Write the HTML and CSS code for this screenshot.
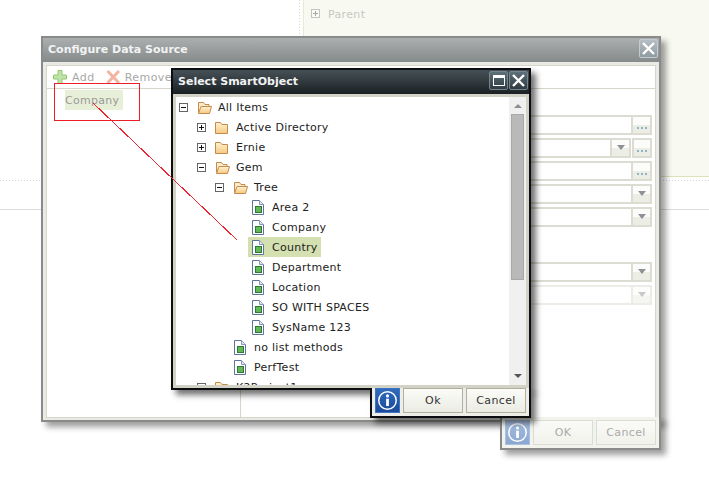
FILE: index.html
```html
<!DOCTYPE html>
<html lang="en">
<head>
<meta charset="utf-8">
<title>Configure Data Source</title>
<link rel="stylesheet" href="styles.css">
</head>
<body>
<svg class="defs" width="0" height="0" aria-hidden="true">
  <defs>
    <linearGradient id="folderFill" x1="0" y1="0" x2="0" y2="1">
      <stop offset="0" stop-color="#fff3d0"/>
      <stop offset="1" stop-color="#f5c880"/>
    </linearGradient>
    <symbol id="folder-open" viewBox="0 0 15 13">
      <path d="M1.5 11.5V1.5h5l1.5 2h4v2" fill="#fbeccb" stroke="#c48a4c"/>
      <path d="M1.5 12.5l2.5-7h10.5l-2 7z" fill="url(#folderFill)" stroke="#c48a4c"/>
    </symbol>
    <symbol id="folder" viewBox="0 0 13 13">
      <path d="M.5 12.5V1.5h5l1.5 2h5.5v9z" fill="url(#folderFill)" stroke="#c48a4c"/>
    </symbol>
    <symbol id="doc" viewBox="0 0 12 15">
      <path d="M.5.5h7l4 4v10H.5z" fill="#fff" stroke="#5f7299"/>
      <path d="M7.5.5v4h4" fill="#dfe5f0" stroke="#8798ba"/>
      <rect x="3.5" y="6.5" width="6" height="6" fill="#62b856" stroke="#2f7a33"/>
    </symbol>
    <symbol id="minus" viewBox="0 0 9 9">
      <rect x=".5" y=".5" width="8" height="8" fill="#fff" stroke="#666"/>
      <path d="M2 4.5h5" stroke="#111"/>
    </symbol>
    <symbol id="plus" viewBox="0 0 9 9">
      <rect x=".5" y=".5" width="8" height="8" fill="#fff" stroke="#666"/>
      <path d="M2 4.5h5M4.5 2v5" stroke="#111"/>
    </symbol>
    <symbol id="cross" viewBox="0 0 19 19">
      <path d="M4 4l11 11M15 4L4 15" stroke="#fff" stroke-width="2.4" fill="none"/>
    </symbol>
    <symbol id="info" viewBox="0 0 25 25">
      <circle cx="12.5" cy="12.5" r="9.5" fill="none" stroke="#fff" stroke-width="1.6"/>
      <rect x="11" y="10.5" width="3" height="8" fill="#fff"/>
      <circle cx="12.5" cy="7.5" r="1.7" fill="#fff"/>
    </symbol>
  </defs>
</svg>

<div class="desktop">
  <div class="backdrop">
    <div class="backdrop-top">
      <div class="gutter"></div>
      <div class="parent-panel">
        <svg class="toggle faded"><use href="#plus"/></svg>
        <span>Parent</span>
      </div>
    </div>
    <div class="rule-dotted"></div>
    <div class="rule-solid"></div>
  </div>

  <section class="window config">
    <header class="titlebar config-title">
      <h2>Configure Data Source</h2>
      <button class="title-btn config-btn" aria-label="Close"><svg><use href="#cross"/></svg></button>
    </header>
    <div class="panel">
      <div class="toolbar">
        <span class="tool">
          <svg class="tool-icon" viewBox="0 0 14 14"><path d="M5 .5h4v4.500h4.500v4H9v4.500H5V9H.5V5H5z" fill="#bfe3a6" stroke="#93c878"/></svg>
          Add
        </span>
        <span class="tool">
          <svg class="tool-icon" viewBox="0 0 14 14"><path d="M1.500 1l11.500 12M13 1L1.500 13" stroke="#f4b4a2" stroke-width="3" fill="none"/></svg>
          Remove
        </span>
      </div>
      <div class="panes">
        <div class="list-pane">
          <div class="list-item">Company</div>
        </div>
        <div class="form-pane">
          <div class="form-row">
            <div class="input"></div><div class="field-btn"><i class="dots"></i></div>
          </div>
          <div class="form-row">
            <div class="input"></div><div class="field-btn arrow-btn"><i class="arrow"></i></div><div class="field-btn spaced"><i class="dots"></i></div>
          </div>
          <div class="form-row">
            <div class="input"></div><div class="field-btn"><i class="dots"></i></div>
          </div>
          <div class="form-row">
            <div class="input"></div><div class="field-btn"><i class="arrow"></i></div>
          </div>
          <div class="form-row">
            <div class="input"></div><div class="field-btn"><i class="arrow"></i></div>
          </div>
          <div class="form-row group-start">
            <div class="input"></div><div class="field-btn"><i class="arrow"></i></div>
          </div>
          <div class="form-row disabled">
            <div class="input"></div><div class="field-btn"><i class="arrow"></i></div>
          </div>
        </div>
      </div>
    </div>
  </section>
  <div class="button-tab config-tab">
    <button class="info-btn faint" aria-label="Info"><svg><use href="#info"/></svg></button>
    <button class="btn muted">OK</button>
    <button class="btn muted">Cancel</button>
  </div>

  <div class="callout"></div>

  <section class="window select">
    <header class="titlebar select-title">
      <h2>Select SmartObject</h2>
      <button class="title-btn select-btn" aria-label="Maximize"><i class="max-glyph"></i></button>
      <button class="title-btn select-btn" aria-label="Close"><svg><use href="#cross"/></svg></button>
    </header>
    <div class="select-body">
      <div class="tree">
        <div class="row lv0"><svg class="toggle"><use href="#minus"/></svg><svg class="ico open"><use href="#folder-open"/></svg><span class="label">All Items</span></div>
        <div class="row lv1"><svg class="toggle"><use href="#plus"/></svg><svg class="ico shut"><use href="#folder"/></svg><span class="label">Active Directory</span></div>
        <div class="row lv1"><svg class="toggle"><use href="#plus"/></svg><svg class="ico shut"><use href="#folder"/></svg><span class="label">Ernie</span></div>
        <div class="row lv1"><svg class="toggle"><use href="#minus"/></svg><svg class="ico open"><use href="#folder-open"/></svg><span class="label">Gem</span></div>
        <div class="row lv2"><svg class="toggle"><use href="#minus"/></svg><svg class="ico open"><use href="#folder-open"/></svg><span class="label">Tree</span></div>
        <div class="row lv3"><i class="toggle"></i><svg class="ico file"><use href="#doc"/></svg><span class="label">Area 2</span></div>
        <div class="row lv3"><i class="toggle"></i><svg class="ico file"><use href="#doc"/></svg><span class="label">Company</span></div>
        <div class="row lv3"><i class="toggle"></i><span class="picked"><svg class="ico file"><use href="#doc"/></svg><span class="label">Country</span></span></div>
        <div class="row lv3"><i class="toggle"></i><svg class="ico file"><use href="#doc"/></svg><span class="label">Department</span></div>
        <div class="row lv3"><i class="toggle"></i><svg class="ico file"><use href="#doc"/></svg><span class="label">Location</span></div>
        <div class="row lv3"><i class="toggle"></i><svg class="ico file"><use href="#doc"/></svg><span class="label">SO WITH SPACES</span></div>
        <div class="row lv3"><i class="toggle"></i><svg class="ico file"><use href="#doc"/></svg><span class="label">SysName 123</span></div>
        <div class="row lv2"><i class="toggle"></i><svg class="ico file"><use href="#doc"/></svg><span class="label">no list methods</span></div>
        <div class="row lv2"><i class="toggle"></i><svg class="ico file"><use href="#doc"/></svg><span class="label">PerfTest</span></div>
        <div class="row lv1"><svg class="toggle"><use href="#plus"/></svg><svg class="ico shut"><use href="#folder"/></svg><span class="label">K2Project1</span></div>
      </div>
      <div class="scrollbar">
        <i class="scroll-up"></i>
        <div class="thumb"></div>
        <i class="scroll-down"></i>
      </div>
    </div>
  </section>
  <div class="button-tab select-tab">
    <button class="info-btn" aria-label="Info"><svg><use href="#info"/></svg></button>
    <button class="btn">Ok</button>
    <button class="btn">Cancel</button>
  </div>

  <svg class="connector" viewBox="0 0 709 491" aria-hidden="true">
    <line x1="93" y1="103" x2="237" y2="240"/>
  </svg>
</div>
</body>
</html>
```

FILE: styles.css
```css
* { box-sizing: border-box; }

html, body {
  margin: 0;
  height: 100%;
  background: #fff;
  overflow: hidden;
}

body {
  font-family: "DejaVu Sans", Verdana, sans-serif;
  font-size: 11px;
  color: #222;
}

.defs { position: absolute; }

.desktop {
  position: relative;
  width: 709px;
  height: 491px;
  overflow: hidden;
}

/* Page behind the dialogs */
.backdrop-top {
  display: flex;
  height: 177px;
}

.gutter {
  width: 304px;
  margin-right: 0;
  position: relative;
  border-right: 1px solid #e6ead6;
  background-image: repeating-linear-gradient(180deg, #d8d8d8 0 1px, transparent 1px 3px);
  background-size: 1px 100%;
  background-position: 299px 0;
  background-repeat: no-repeat;
}

.parent-panel {
  flex: 1;
  display: flex;
  align-items: flex-start;
  gap: 8px;
  padding: 8px 0 0 7px;
  background: #f8f9f1;
  border-bottom: 1px solid #d9e4b8;
  color: #c8c8c0;
  line-height: 14px;
  letter-spacing: .35px;
}

.parent-panel .toggle { margin-top: 1px; }

.rule-dotted {
  height: 1px;
  margin-top: 3px;
  background-image: repeating-linear-gradient(90deg, #d4d4d4 0 1px, transparent 1px 3px);
}

.rule-solid {
  height: 1px;
  margin-top: 28px;
  background: #dcdcdc;
}

/* Windows */
.window {
  position: absolute;
  display: flex;
  flex-direction: column;
  border-style: solid;
  border-width: 2px;
}

.config {
  left: 41px;
  top: 36px;
  width: 620px;
  height: 386px;
  border-color: #8a8a8a;
  background: #eaeae4;
  box-shadow: 5px 5px 6px rgba(0, 0, 0, .38);
}

.select {
  left: 171px;
  top: 68px;
  width: 360px;
  height: 322px;
  border-color: #0c0e0f;
  background: #d2d3c6;
  box-shadow: 5px 5px 6px rgba(0, 0, 0, .55);
}

.titlebar {
  display: flex;
  align-items: flex-start;
  flex: none;
  height: 24px;
}

.titlebar h2 {
  flex: 1;
  margin: 0;
  font-size: 11px;
  font-weight: 700;
  line-height: 22px;
  color: #f2f3f3;
}

.config-title {
  padding: 1px 1px 0 5px;
  background: linear-gradient(180deg, #acafaf, #858a8a);
}

.select-title {
  padding: 1px 1px 0 5px;
  gap: 1px;
  background: linear-gradient(180deg, #465157, #1a2023);
}

.title-btn {
  width: 19px;
  height: 19px;
  padding: 0;
  display: flex;
  align-items: center;
  justify-content: center;
  border-radius: 2px;
}

.title-btn svg { width: 19px; height: 19px; flex: none; }

.config-btn {
  border: 1px solid #c4cbd0;
  background: linear-gradient(180deg, #b5bec4, #8f9aa1);
}

.select-btn {
  border: 1px solid #74858d;
  background: linear-gradient(180deg, #5e7079, #2f3b41);
}

.max-glyph {
  display: block;
  width: 12px;
  height: 11px;
  border: 1px solid #fff;
  border-top-width: 3px;
}

/* Configure panel */
.panel {
  flex: 1;
  min-height: 0;
  display: flex;
  flex-direction: column;
  margin: 3px 3px 2px;
  background: #fff;
  border: 1px solid #d6d6ca;
}

.toolbar {
  flex: none;
  height: 23px;
  display: flex;
  align-items: center;
  gap: 11px;
  padding: 0 0 0 6px;
  border-bottom: 1px solid #d6d6ca;
  color: #a8a8a8;
  letter-spacing: .45px;
}

.tool { display: flex; align-items: center; gap: 5px; }
.tool-icon { width: 14px; height: 14px; }

.panes { flex: 1; display: flex; min-height: 0; }

.list-pane {
  flex: none;
  width: 194px;
  padding: 1px 0 0 18px;
  border-right: 1px solid #d6d6ca;
}

.list-item {
  width: 58px;
  height: 20px;
  line-height: 21px;
  letter-spacing: .3px;
  background: #e8efd9;
  color: #9a9a9a;
}

.form-pane {
  flex: 1;
  display: flex;
  flex-direction: column;
  gap: 3px;
  padding: 26px 3px 0 60px;
}

.form-row { display: flex; height: 20px; }
.form-row.group-start { margin-top: 32px; }
.form-row.disabled { opacity: .5; }

.input {
  flex: 1;
  background: #fff;
  border: 2px solid #dcdcd2;
  border-right-width: 1px;
}

.field-btn {
  flex: none;
  width: 20px;
  display: flex;
  align-items: center;
  justify-content: center;
  border: 2px solid #dcdcd2;
  border-left-width: 1px;
  background: linear-gradient(180deg, #fcfcfa 0 50%, #ecede5 50% 100%);
}

.field-btn.spaced { margin-left: 1px; border-left-width: 2px; }

.dots {
  display: block;
  width: 10px;
  height: 2px;
  margin-top: 6px;
  background: repeating-linear-gradient(90deg, #8fb4c8 0 2px, transparent 2px 4px);
}

.arrow {
  display: block;
  width: 0;
  height: 0;
  margin-bottom: 2px;
  border-style: solid;
  border-width: 5px 4px 0;
  border-color: #8f9294 transparent transparent;
}

/* Button strips hanging off the dialogs */
.button-tab {
  position: absolute;
  display: flex;
  gap: 3px;
  padding: 0 3px 3px;
  border: solid;
  border-width: 0 2px 2px;
  clip-path: inset(0 -20px -20px -20px);
}

.config-tab {
  left: 500px;
  top: 417px;
  height: 33px;
  padding-top: 3px;
  border-color: #8a8a8a;
  background: #f3f3ee;
  box-shadow: 5px 5px 6px rgba(0, 0, 0, .38);
}

.select-tab {
  left: 370px;
  top: 388px;
  height: 30px;
  border-color: #0c0e0f;
  background: #eeeee8;
  box-shadow: 5px 5px 6px rgba(0, 0, 0, .55);
}

.info-btn {
  flex: none;
  width: 25px;
  height: 25px;
  padding: 0;
  display: flex;
  border: 1px solid #3d74c4;
  background: linear-gradient(180deg, #2f6bbd, #1c4a99);
}

.info-btn svg { width: 23px; height: 23px; }

.info-btn.faint {
  border-color: #a9c0e2;
  background: linear-gradient(180deg, #a5bde0, #8ba7d1);
}

.btn {
  flex: none;
  width: 60px;
  height: 25px;
  padding: 0;
  font: inherit;
  letter-spacing: .4px;
  color: #333;
  border: 1px solid #b0b0a0;
  background: linear-gradient(180deg, #fbfbf8, #ecece4);
}

.btn.muted {
  color: #aaa;
  border-color: #dcdcd4;
  background: linear-gradient(180deg, #fafaf7, #f2f2ec);
}

/* Tree */
.select-body {
  flex: 1;
  min-height: 0;
  display: flex;
  margin: 3px 3px 3px;
}

.tree {
  flex: 1;
  min-width: 0;
  padding-top: 0;
  background: #fff;
  overflow: hidden;
}

.row {
  display: flex;
  align-items: center;
  height: 20px;
  white-space: nowrap;
  letter-spacing: .27px;
}

.lv0 { padding-left: 3px; }
.lv1 { padding-left: 21px; }
.lv2 { padding-left: 39px; }
.lv3 { padding-left: 57px; }

.toggle {
  display: block;
  flex: none;
  width: 9px;
  height: 9px;
  margin-right: 9px;
}

.toggle.faded { opacity: .35; margin-right: 0; }

.ico { display: block; flex: none; }
.ico.open { width: 15px; height: 13px; margin-right: 6px; }
.ico.shut { width: 13px; height: 13px; margin-right: 8px; }
.ico.file { width: 12px; height: 15px; margin-left: 1px; margin-right: 8px; }

.picked {
  display: flex;
  align-items: center;
  height: 20px;
  margin-left: -3px;
  padding: 0 3px 0 3px;
  background: #d4e0b0;
}

.scrollbar {
  flex: none;
  width: 17px;
  display: flex;
  flex-direction: column;
  align-items: center;
  background: #f0f0f0;
}

.thumb {
  width: 13px;
  height: 166px;
  margin-top: 6px;
  background: #b9b9b9;
  border: 1px solid #a8a8a8;
}

.scroll-up, .scroll-down {
  display: block;
  width: 0;
  height: 0;
  border-style: solid;
}

.scroll-up {
  margin-top: 7px;
  border-width: 0 4px 4px;
  border-color: transparent transparent #8f8f8f;
}

.scroll-down {
  margin-top: auto;
  margin-bottom: 7px;
  border-width: 4px 4px 0;
  border-color: #555 transparent transparent;
}

/* Annotations */
.callout {
  position: absolute;
  left: 54px;
  top: 83px;
  width: 86px;
  height: 38px;
  border: 1px solid #ee1c25;
}

.connector {
  position: absolute;
  left: 0;
  top: 0;
  width: 709px;
  height: 491px;
  pointer-events: none;
}

.connector line {
  stroke: #ee2430;
  stroke-width: 1;
  shape-rendering: crispEdges;
}
```
